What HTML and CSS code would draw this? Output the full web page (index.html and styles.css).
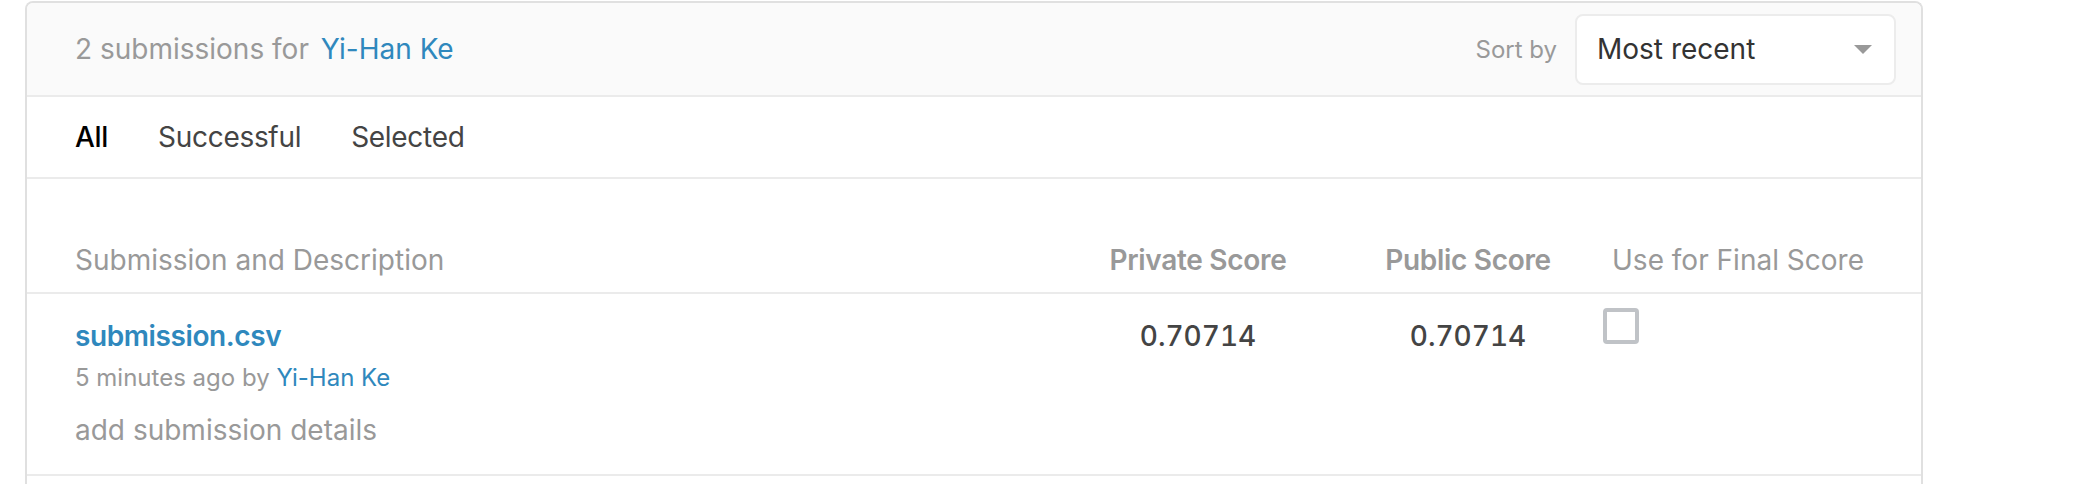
FILE: index.html
```html
<!DOCTYPE html>
<html lang="en">
<head>
<meta charset="utf-8">
<title>Submissions</title>
<link rel="stylesheet" href="styles.css">
</head>
<body>
<div class="card">
  <div class="card-head">
    <div class="title">2 submissions for <a class="link" href="#">Yi-Han Ke</a></div>
    <div class="sort">
      <span class="sort-label">Sort by</span>
      <div class="select">
        <span class="select-value">Most recent</span>
        <span class="caret"></span>
      </div>
    </div>
  </div>
  <nav class="tabs">
    <span class="tab tab-active">All</span>
    <span class="tab">Successful</span>
    <span class="tab">Selected</span>
  </nav>
  <div class="table">
    <div class="grid thead">
      <div class="th">Submission and Description</div>
      <div class="th th-strong center">Private Score</div>
      <div class="th th-strong center">Public Score</div>
      <div class="th center">Use for Final Score</div>
    </div>
    <div class="grid trow">
      <div class="desc">
        <a class="file link" href="#">submission.csv</a>
        <div class="meta">5 minutes ago by <a class="link" href="#">Yi-Han Ke</a></div>
        <div class="details">add submission details</div>
      </div>
      <div class="score center">0.70714</div>
      <div class="score center">0.70714</div>
      <div class="select-cell"><span class="checkbox"></span></div>
    </div>
  </div>
</div>
</body>
</html>
```
FILE: styles.css
```css
html, body {
  margin: 0;
  padding: 0;
  background: #ffffff;
  overflow: hidden;
}
body {
  font-family: Inter, "Noto Sans", "Liberation Sans", sans-serif;
  color: #333333;
}
a { text-decoration: none; }
.link { color: #2f88bd; }

.card {
  box-sizing: border-box;
  margin: 1px 0 0 25px;
  width: 1898px;
  height: 483px;
  border: 2px solid #e0e0e0;
  border-bottom: 0;
  border-radius: 8px 8px 0 0;
  overflow: hidden;
}

.card-head {
  display: flex;
  align-items: center;
  justify-content: space-between;
  height: 92px;
  padding: 0 25px 0 48px;
  background: #fafafa;
  border-bottom: 2px solid #ebebeb;
}
.title {
  font-size: 28px;
  line-height: 36px;
  color: #999999;
}
.title .link { margin-left: 4px; }

.sort {
  display: flex;
  align-items: center;
  gap: 18px;
}
.sort-label {
  font-size: 24px;
  color: #999999;
}
.select {
  box-sizing: border-box;
  display: flex;
  align-items: center;
  justify-content: space-between;
  width: 321px;
  height: 71px;
  padding: 0 22px 0 20px;
  background: #ffffff;
  border: 2px solid #ececec;
  border-radius: 8px;
}
.select-value {
  font-size: 28px;
  color: #333333;
}
.caret {
  width: 0;
  height: 0;
  border-left: 9px solid transparent;
  border-right: 9px solid transparent;
  border-top: 9px solid #999999;
}

.tabs {
  display: flex;
  align-items: center;
  gap: 50px;
  height: 80px;
  padding-left: 48px;
  border-bottom: 2px solid #ebebeb;
}
.tab {
  font-size: 28px;
  line-height: 36px;
  color: #444444;
  letter-spacing: -0.3px;
}
.tab-active {
  color: #000000;
  font-weight: 500;
}

.table { padding-top: 63px; }
.grid {
  display: grid;
  grid-template-columns: 1fr 270px 270px 270px;
  padding: 0 48px;
}
.thead {
  padding-bottom: 14px;
  border-bottom: 2px solid #ebebeb;
}
.th {
  font-size: 28px;
  line-height: 36px;
  color: #999999;
}
.th-strong {
  font-weight: 600;
  letter-spacing: -0.3px;
}
.center { text-align: center; }

.trow {
  align-items: start;
  padding-top: 14px;
  padding-bottom: 26px;
  border-bottom: 2px solid #ebebeb;
}
.desc {
  display: flex;
  flex-direction: column;
  align-items: flex-start;
  padding-top: 10px;
}
.file {
  font-size: 28px;
  line-height: 36px;
  font-weight: 600;
  letter-spacing: -0.4px;
}
.meta {
  margin-top: 8px;
  font-size: 24px;
  line-height: 32px;
  color: #999999;
}
.details {
  margin-top: 18px;
  font-size: 28px;
  line-height: 36px;
  color: #999999;
}
.score {
  padding-top: 10px;
  font-size: 28px;
  line-height: 36px;
  font-weight: 500;
  color: #444444;
  font-variant-numeric: tabular-nums;
}
.select-cell { display: flex; }
.checkbox {
  box-sizing: border-box;
  width: 36px;
  height: 36px;
  border: 4px solid #c0c3c7;
  border-radius: 4px;
  background: #ffffff;
}
```
